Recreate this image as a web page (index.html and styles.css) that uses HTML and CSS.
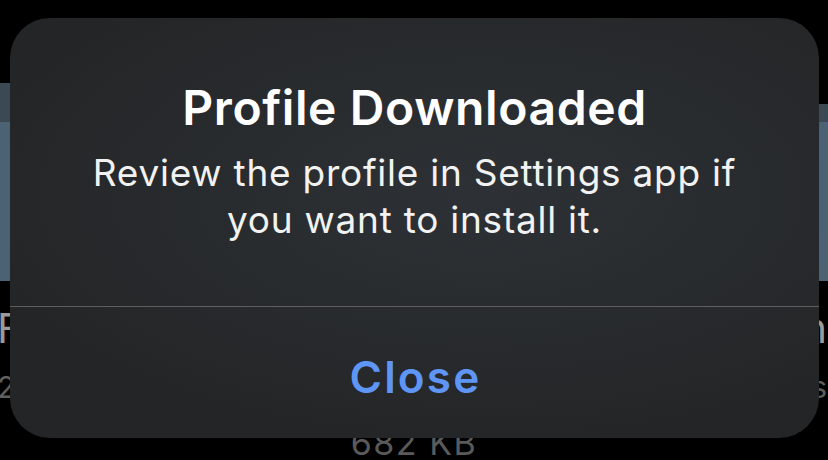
FILE: index.html
```html
<!DOCTYPE html>
<html lang="en">
<head>
<meta charset="utf-8">
<title>Profile Downloaded</title>
<link rel="stylesheet" href="styles.css">
</head>
<body>
<div class="screen">
  <div class="banner"></div>
  <div class="row row-title"><span>Files</span><span>Certification</span></div>
  <div class="row row-sub"><span>2 items</span><span>Details</span></div>
  <div class="size">682 KB</div>

  <div class="alert" role="alertdialog">
    <div class="alert-body">
      <h1 class="alert-title">Profile Downloaded</h1>
      <p class="alert-message">Review the profile in Settings app if you want to install it.</p>
    </div>
    <button class="alert-button">Close</button>
  </div>
</div>
</body>
</html>
```
FILE: styles.css
```css
html, body {
  margin: 0;
  padding: 0;
  background: #000;
}
body {
  width: 828px;
  height: 460px;
  overflow: hidden;
  font-family: Inter, "Noto Sans", "DejaVu Sans", sans-serif;
}
.screen {
  position: relative;
  width: 828px;
  height: 460px;
  overflow: hidden;
  display: flex;
  flex-direction: column;
}
.banner {
  position: relative;
  margin-top: 83px;
  height: 198px;
  flex: none;
  background: linear-gradient(to bottom, #3a4953 0, #3a4953 39px, #4b6273 39px, #4b6273 100%);
}
.banner::after {
  content: "";
  position: absolute;
  right: 0;
  top: 0;
  width: 12px;
  height: 21px;
  background: #000;
}
.row {
  display: flex;
  justify-content: space-between;
  margin-left: -3px;
  margin-right: 1px;
  flex: none;
}
.row-title {
  margin-top: 22px;
  font-size: 41px;
  line-height: 50px;
  color: #9a9a9a;
}
.row-sub {
  margin-top: 16px;
  font-size: 30px;
  line-height: 36px;
  color: #5e5e5e;
}
.size {
  margin-top: 18px;
  font-size: 34px;
  line-height: 40px;
  letter-spacing: 1.5px;
  color: #5a5a5a;
  text-align: center;
  flex: none;
}
.alert {
  position: absolute;
  left: 10px;
  top: 18px;
  width: 809px;
  height: 420px;
  border-radius: 40px;
  overflow: hidden;
  display: flex;
  flex-direction: column;
  background:
    radial-gradient(ellipse 65% 60% at 58% 42%, #2d3135 0%, #282b2e 55%, #242526 100%);
}
.alert-body {
  height: 288px;
  box-sizing: border-box;
  padding: 62px 70px 0;
  text-align: center;
  color: #fff;
}
.alert-title {
  margin: 0 -40px;
  font-size: 48px;
  line-height: 56px;
  font-weight: 600;
  letter-spacing: 0.6px;
}
.alert-message {
  margin: 13px 0 0;
  font-size: 37px;
  line-height: 47px;
  font-weight: 400;
  letter-spacing: 0.75px;
  color: #f2f2f2;
}
.alert-button {
  flex: 1;
  margin: 0;
  border: 0;
  border-top: 1px solid #5e5e5e;
  background: transparent;
  padding: 8px 0 0 2px;
  font-family: Inter, "Noto Sans", sans-serif;
  font-size: 44px;
  font-weight: 600;
  letter-spacing: 2.2px;
  color: #5f95f5;
  text-align: center;
}
```
